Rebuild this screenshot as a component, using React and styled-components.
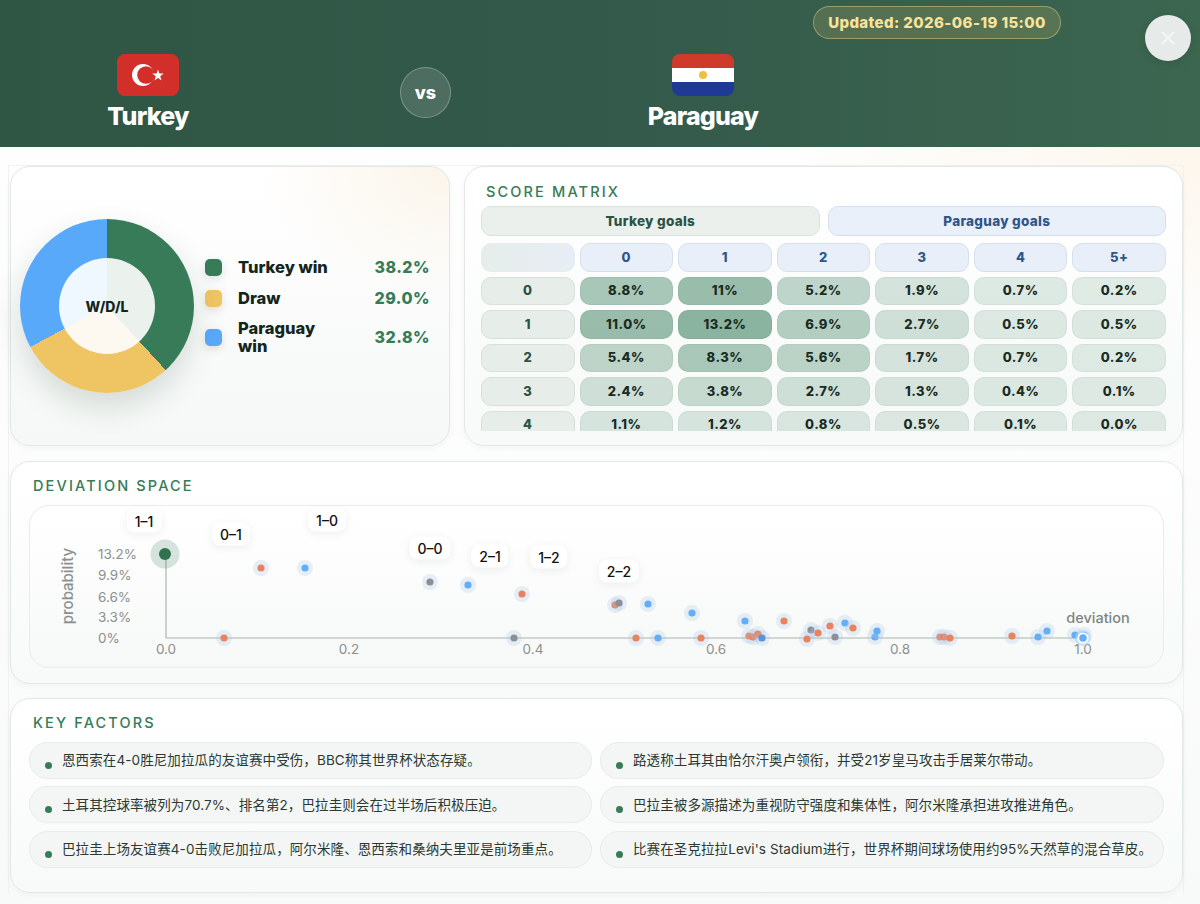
import React from "react";
import styled, {createGlobalStyle} from "styled-components";

const GlobalStyle = createGlobalStyle`
  html, body {
    margin: 0;
    height: 904px;
    overflow: hidden;
    background: #fff;
    font-family: Inter, "Noto Sans CJK SC", sans-serif;
  }
  * { box-sizing: border-box; }
`;

const Page = styled.div`
  width: 1200px;
  height: 904px;
  background:
    radial-gradient(420px 200px at 100% 147px, #fdf6ec 0%, rgba(253,246,236,0) 100%),
    linear-gradient(180deg, #ffffff 0%, #f8faf9 100%);
`;

const Header = styled.header`
  position: relative;
  height: 147px;
  padding-left: 9.25px;
  display: grid;
  grid-template-columns: repeat(3, 277.5px);
  background: linear-gradient(90deg, #2f5544 0%, #33594a 50%, #3c6650 100%);
`;

const Team = styled.div`
  display: flex;
  flex-direction: column;
  align-items: center;
  padding-top: 54px;
`;

const Flag = styled.svg`
  display: block;
  width: 62px;
  height: 42px;
  border-radius: 8px;
`;

const TeamName = styled.div`
  margin-top: 4px;
  color: #fff;
  font-size: 25px;
  line-height: 32px;
  font-weight: 800;
  letter-spacing: -0.8px;
`;

const VsWrap = styled.div`
  display: flex;
  justify-content: center;
  padding-top: 67px;
`;

const VsBadge = styled.div`
  width: 51px;
  height: 51px;
  border-radius: 50%;
  display: flex;
  align-items: center;
  justify-content: center;
  color: #fff;
  font-size: 18px;
  font-weight: 800;
  background: rgba(255,255,255,0.13);
  border: 1px solid rgba(255,255,255,0.28);
`;

const Updated = styled.div`
  position: absolute;
  left: 813px;
  top: 6px;
  width: 248px;
  height: 33px;
  border-radius: 17px;
  display: flex;
  align-items: center;
  justify-content: center;
  color: #f8e39b;
  font-size: 15px;
  font-weight: 800;
  letter-spacing: 0.4px;
  white-space: nowrap;
  background: rgba(240,205,110,0.16);
  border: 1px solid rgba(240,215,130,0.45);
`;

const CloseButton = styled.button`
  position: absolute;
  left: 1145px;
  top: 15px;
  width: 46px;
  height: 46px;
  padding: 0;
  border: none;
  border-radius: 50%;
  display: flex;
  align-items: center;
  justify-content: center;
  background: #e6eae8;
  box-shadow: 0 2px 8px rgba(0,0,0,0.12);
  svg { display: block; }
`;

const Board = styled.main`
  margin: 18px 16px 0 8px;
  height: 729px;
  padding: 0 0 0 1px;
  border: 1px solid #eff2f0;
  border-bottom: none;
  display: flex;
  flex-direction: column;
  gap: 14.5px;
`;

const TopRow = styled.div`
  display: grid;
  grid-template-columns: 440px 719px;
  gap: 14px;
`;

const Panel = styled.section`
  border: 1.5px solid #e2e8e4;
  border-radius: 20px;
  background: linear-gradient(180deg, #ffffff 0%, #f7faf8 100%);
  box-shadow: 0 2px 6px rgba(30,60,45,0.04);
`;

const DonutPanel = styled(Panel)`
  height: 280px;
  padding-left: 9px;
  display: flex;
  align-items: center;
  background:
    radial-gradient(190px 130px at 100% 0%, #fbf5ea 0%, rgba(251,245,234,0) 100%),
    linear-gradient(180deg, #ffffff 0%, #f5f8f6 100%);
`;

const Donut = styled.div`
  position: relative;
  flex: none;
  width: 174px;
  height: 174px;
  border-radius: 50%;
  background: conic-gradient(#387b58 0 38.2%, #efc463 38.2% 67.2%, #59a9fa 67.2% 100%);
  box-shadow: 0 14px 30px rgba(30,60,45,0.16);
`;

const DonutHole = styled.div`
  position: absolute;
  left: 39px;
  top: 39px;
  width: 96px;
  height: 96px;
  border-radius: 50%;
  display: flex;
  align-items: center;
  justify-content: center;
  color: #14251d;
  font-size: 14px;
  font-weight: 800;
  background: rgba(255,255,255,0.9);
`;

const Legend = styled.div`
  flex: 1;
  margin-left: 11px;
  padding-right: 19px;
  display: flex;
  flex-direction: column;
  gap: 7px;
`;

const LegendRow = styled.div`
  display: grid;
  grid-template-columns: 17px 1fr auto;
  align-items: center;
  column-gap: 16px;
  min-height: 24px;
`;

const Swatch = styled.span`
  width: 17px;
  height: 17px;
  border-radius: 5px;
  background: ${p => p.$color};
  box-shadow: 0 3px 8px rgba(30,60,45,0.14);
`;

const LegendLabel = styled.span`
  width: 100px;
  padding: 2px 0;
  color: #14251d;
  font-size: 16.5px;
  line-height: 18px;
  font-weight: 800;
`;

const LegendValue = styled.span`
  color: #387b58;
  font-size: 16px;
  font-weight: 800;
  letter-spacing: 0.5px;
`;

const Title = styled.h2`
  margin: 0 0 ${p => p.$gap || 5}px ${p => p.$indent || 4}px;
  color: #387b58;
  font-size: 14.5px;
  line-height: 18px;
  font-weight: 500;
  letter-spacing: 2.15px;
`;

const MatrixPanel = styled(Panel)`
  height: 280px;
  padding: 16px 16px 0;
`;

const MatrixClip = styled.div`
  height: 225px;
  overflow: hidden;
`;

const SideHeads = styled.div`
  display: grid;
  grid-template-columns: 1fr 1fr;
  gap: 8px;
  margin-bottom: 7px;
`;

const SideHead = styled.div`
  height: 30px;
  border-radius: 10px;
  display: flex;
  align-items: center;
  justify-content: center;
  font-size: 13.5px;
  font-weight: 800;
  letter-spacing: 0.3px;
  color: ${p => p.$away ? "#2f5688" : "#2b5242"};
  background: ${p => p.$away ? "#e9f0fa" : "#ebf0ed"};
  border: 1.5px solid ${p => p.$away ? "#d5e0ee" : "#d9e2dd"};
`;

const Grid = styled.div`
  display: grid;
  grid-template-columns: repeat(7, 1fr);
  grid-auto-rows: 28.5px;
  gap: 5px;
`;

const Cell = styled.div`
  border-radius: 10px;
  display: flex;
  align-items: center;
  justify-content: center;
  font-size: 13px;
  line-height: 1;
  font-weight: 800;
  letter-spacing: 0.5px;
`;

const Corner = styled(Cell)`
  background: linear-gradient(90deg, #e6edea 0%, #e7edf5 100%);
`;

const ColHead = styled(Cell)`
  color: #2f5688;
  background: #e8eff8;
  border: 1.5px solid #d7e0ee;
`;

const RowHead = styled(Cell)`
  color: #2b5242;
  background: #e7eeea;
  border: 1.5px solid #d7e0db;
`;

const Prob = styled(Cell)`
  color: #1a2b23;
  background: rgba(40,115,80, ${p => (0.125 + p.$p * 0.031).toFixed(3)});
  border: 1.5px solid rgba(47,90,70,0.06);
`;

const ChartPanel = styled(Panel)`
  height: 223px;
  padding: 15px 18px 0;
`;

const Chart = styled.div`
  position: relative;
  width: 1135px;
  height: 163px;
  border: 1px solid #e8edea;
  border-radius: 20px;
  background: linear-gradient(180deg, #ffffff 0%, #f6f9f7 100%);
  svg { position: absolute; left: -1px; top: -1px; overflow: visible; }
`;

const ScoreTag = styled.div`
  position: absolute;
  left: ${p => p.$x - 30}px;
  top: ${p => p.$y - 506}px;
  transform: translate(-50%, -50%);
  padding: 0 8px;
  height: 23px;
  border-radius: 8px;
  display: flex;
  align-items: center;
  color: #111;
  font-size: 14px;
  font-weight: 500;
  background: #fff;
  box-shadow: 0 2px 8px rgba(30,60,45,0.07);
`;

const FactorsPanel = styled(Panel)`
  height: 195px;
  padding: 15px 18px 0;
`;

const FactorGrid = styled.ul`
  list-style: none;
  margin: 0;
  padding: 0;
  display: grid;
  grid-template-columns: 563px 564px;
  grid-auto-rows: 37px;
  column-gap: 8px;
  row-gap: 7.5px;
`;

const Factor = styled.li`
  position: relative;
  padding: 0 0 2px 32px;
  border-radius: 19px;
  display: flex;
  align-items: center;
  color: #2c3832;
  font-size: 13.5px;
  letter-spacing: 0.1px;
  white-space: nowrap;
  background: #f3f6f4;
  border: 1.5px solid #e7ece9;
  &::before {
    content: "";
    position: absolute;
    left: 15px;
    top: 19px;
    width: 7px;
    height: 7px;
    border-radius: 50%;
    background: #387b58;
  }
`;

const goals = ["0", "1", "2", "3", "4", "5+"];

const matrix = [
  ["8.8%", "11%", "5.2%", "1.9%", "0.7%", "0.2%"],
  ["11.0%", "13.2%", "6.9%", "2.7%", "0.5%", "0.5%"],
  ["5.4%", "8.3%", "5.6%", "1.7%", "0.7%", "0.2%"],
  ["2.4%", "3.8%", "2.7%", "1.3%", "0.4%", "0.1%"],
  ["1.1%", "1.2%", "0.8%", "0.5%", "0.1%", "0.0%"],
];

const factors = [
  "恩西索在4-0胜尼加拉瓜的友谊赛中受伤\uFF0CBBC称其世界杯状态存疑。",
  "路透称土耳其由恰尔汗奥卢领衔\uFF0C并受21岁皇马攻击手居莱尔带动。",
  "土耳其控球率被列为70.7%、排名第2\uFF0C巴拉圭则会在过半场后积极压迫。",
  "巴拉圭被多源描述为重视防守强度和集体性\uFF0C阿尔米隆承担进攻推进角色。",
  "巴拉圭上场友谊赛4-0击败尼加拉瓜\uFF0C阿尔米隆、恩西索和桑纳夫里亚是前场重点。",
  "比赛在圣克拉拉Levi's Stadium进行\uFF0C世界杯期间球场使用约95%天然草的混合草皮。",
];

const colors = {o: "#e8825f", b: "#64aef8", g: "#8b9096", d: "#5b93d8"};

// x, y in page pixels, the chart's viewBox starts at the box corner
const dots = [
  [261, 568, "o"], [305, 568, "b"], [224, 638, "o"], [430, 582, "g"], [468, 585, "b"],
  [522, 594, "o"], [615, 605, "o"], [619, 603, "g"], [648, 604, "b"], [692, 613, "b"],
  [745, 621, "b"], [784, 621, "o"], [514, 638, "g"], [636, 638, "o"], [658, 638, "b"],
  [701, 638, "o"], [749, 636, "o"], [753, 637, "o"], [758, 634, "o"], [762, 638, "d"],
  [811, 630, "g"], [807, 639, "o"], [818, 633, "o"], [830, 626, "o"], [845, 623, "b"],
  [853, 628, "o"], [835, 637, "g"], [875, 637, "b"], [877, 631, "b"], [940, 637, "o"],
  [944, 637, "o"], [950, 638, "o"], [1012, 636, "o"], [1038, 637, "b"], [1047, 631, "b"],
  [1075, 635, "b"], [1084, 635, "b"],
];

const tags = [
  ["1–1", 144, 521], ["0–1", 231, 534], ["1–0", 327, 520], ["0–0", 430, 548],
  ["2–1", 490, 556], ["1–2", 549, 557], ["2–2", 619, 571],
];

const xTicks = [["0.0", 166], ["0.2", 349], ["0.4", 533], ["0.6", 716], ["0.8", 900], ["1.0", 1083]];
const yTicks = [["13.2%", 554], ["9.9%", 575], ["6.6%", 597], ["3.3%", 617], ["0%", 638]];

const TurkeyFlag = () => (
  <Flag viewBox="0 0 62 42">
    <rect width="62" height="42" fill="#d32f2a"/>
    <circle cx="26" cy="21" r="11" fill="#fff"/>
    <circle cx="29" cy="21" r="8.8" fill="#d32f2a"/>
    <polygon fill="#fff" points="41,15.5 42.4,19.6 46.7,19.6 43.2,22.2 44.5,26.4 41,23.9 37.5,26.4 38.8,22.2 35.3,19.6 39.6,19.6"/>
  </Flag>
);

const ParaguayFlag = () => (
  <Flag viewBox="0 0 62 42">
    <rect width="62" height="14" fill="#cf3b2b"/>
    <rect y="14" width="62" height="14" fill="#fff"/>
    <rect y="28" width="62" height="14" fill="#1e3a94"/>
    <circle cx="31" cy="21" r="4" fill="#efc040"/>
  </Flag>
);

const ScatterPlot = () => (
  <svg width="1135" height="163" viewBox="29 505 1135 163" fontFamily="Inter, sans-serif">
    <line x1="166" y1="554" x2="166" y2="638" stroke="#aab5b0" strokeWidth="1.2"/>
    <line x1="166" y1="638" x2="1083" y2="638" stroke="#aab5b0" strokeWidth="1.2"/>
    <text x="68" y="591" fill="#8b908e" fontSize="15" fontWeight="500" textAnchor="middle" transform="rotate(-90 68 586)">probability</text>
    {yTicks.map(([label, y]) => (
      <text key={label} x="98" y={y + 4.5} fill="#8b908e" fontSize="13.5">{label}</text>
    ))}
    {xTicks.map(([label, x]) => (
      <text key={label} x={x} y="654" fill="#8b908e" fontSize="13.5" textAnchor="middle">{label}</text>
    ))}
    <text x="1098" y="623" fill="#7f8482" fontSize="14.5" fontWeight="500" textAnchor="middle">deviation</text>
    <circle cx="165" cy="554" r="14.5" fill="#387b58" fillOpacity="0.2"/>
    <circle cx="165" cy="554" r="6" fill="#2f7150"/>
    {dots.map(([x, y, c], i) => (
      <g key={i}>
        <circle cx={x} cy={y} r="8" fill="#a9c4e6" fillOpacity="0.26"/>
        <circle cx={x} cy={y} r="3.6" fill={colors[c]}/>
      </g>
    ))}
    <circle cx="1083" cy="638" r="8" fill="#a9d0f8" fillOpacity="0.5"/>
    <circle cx="1083" cy="638" r="5.6" fill="#fff"/>
    <circle cx="1083" cy="638" r="3.8" fill={colors.b}/>
  </svg>
);

export default function App() {
  return (
    <Page>
      <GlobalStyle/>
      <Header>
        <Team>
          <TurkeyFlag/>
          <TeamName>Turkey</TeamName>
        </Team>
        <VsWrap><VsBadge>vs</VsBadge></VsWrap>
        <Team>
          <ParaguayFlag/>
          <TeamName>Paraguay</TeamName>
        </Team>
        <Updated>Updated: 2026-06-19 15:00</Updated>
        <CloseButton aria-label="close">
          <svg width="16" height="16" viewBox="0 0 16 16">
            <path d="M2.5 2.5 L13.5 13.5 M13.5 2.5 L2.5 13.5" stroke="#f4f7f6" strokeWidth="2" strokeLinecap="round"/>
          </svg>
        </CloseButton>
      </Header>
      <Board>
        <TopRow>
          <DonutPanel>
            <Donut><DonutHole>W/D/L</DonutHole></Donut>
            <Legend>
              <LegendRow>
                <Swatch $color="#387b58"/>
                <LegendLabel>Turkey win</LegendLabel>
                <LegendValue>38.2%</LegendValue>
              </LegendRow>
              <LegendRow>
                <Swatch $color="#efc463"/>
                <LegendLabel>Draw</LegendLabel>
                <LegendValue>29.0%</LegendValue>
              </LegendRow>
              <LegendRow>
                <Swatch $color="#59a9fa"/>
                <LegendLabel>Paraguay win</LegendLabel>
                <LegendValue>32.8%</LegendValue>
              </LegendRow>
            </Legend>
          </DonutPanel>
          <MatrixPanel>
            <Title $indent={5}>SCORE MATRIX</Title>
            <MatrixClip>
              <SideHeads>
                <SideHead>Turkey goals</SideHead>
                <SideHead $away>Paraguay goals</SideHead>
              </SideHeads>
              <Grid>
                <Corner/>
                {goals.map(g => <ColHead key={g}>{g}</ColHead>)}
                {matrix.map((row, r) => (
                  <React.Fragment key={r}>
                    <RowHead>{r}</RowHead>
                    {row.map((v, c) => <Prob key={c} $p={parseFloat(v)}>{v}</Prob>)}
                  </React.Fragment>
                ))}
              </Grid>
            </MatrixClip>
          </MatrixPanel>
        </TopRow>
        <ChartPanel>
          <Title $gap={10}>DEVIATION SPACE</Title>
          <Chart>
            <ScatterPlot/>
            {tags.map(([label, x, y]) => <ScoreTag key={label} $x={x} $y={y}>{label}</ScoreTag>)}
          </Chart>
        </ChartPanel>
        <FactorsPanel>
          <Title $gap={9.5}>KEY FACTORS</Title>
          <FactorGrid>
            {factors.map(f => <Factor key={f}>{f}</Factor>)}
          </FactorGrid>
        </FactorsPanel>
      </Board>
    </Page>
  );
}
